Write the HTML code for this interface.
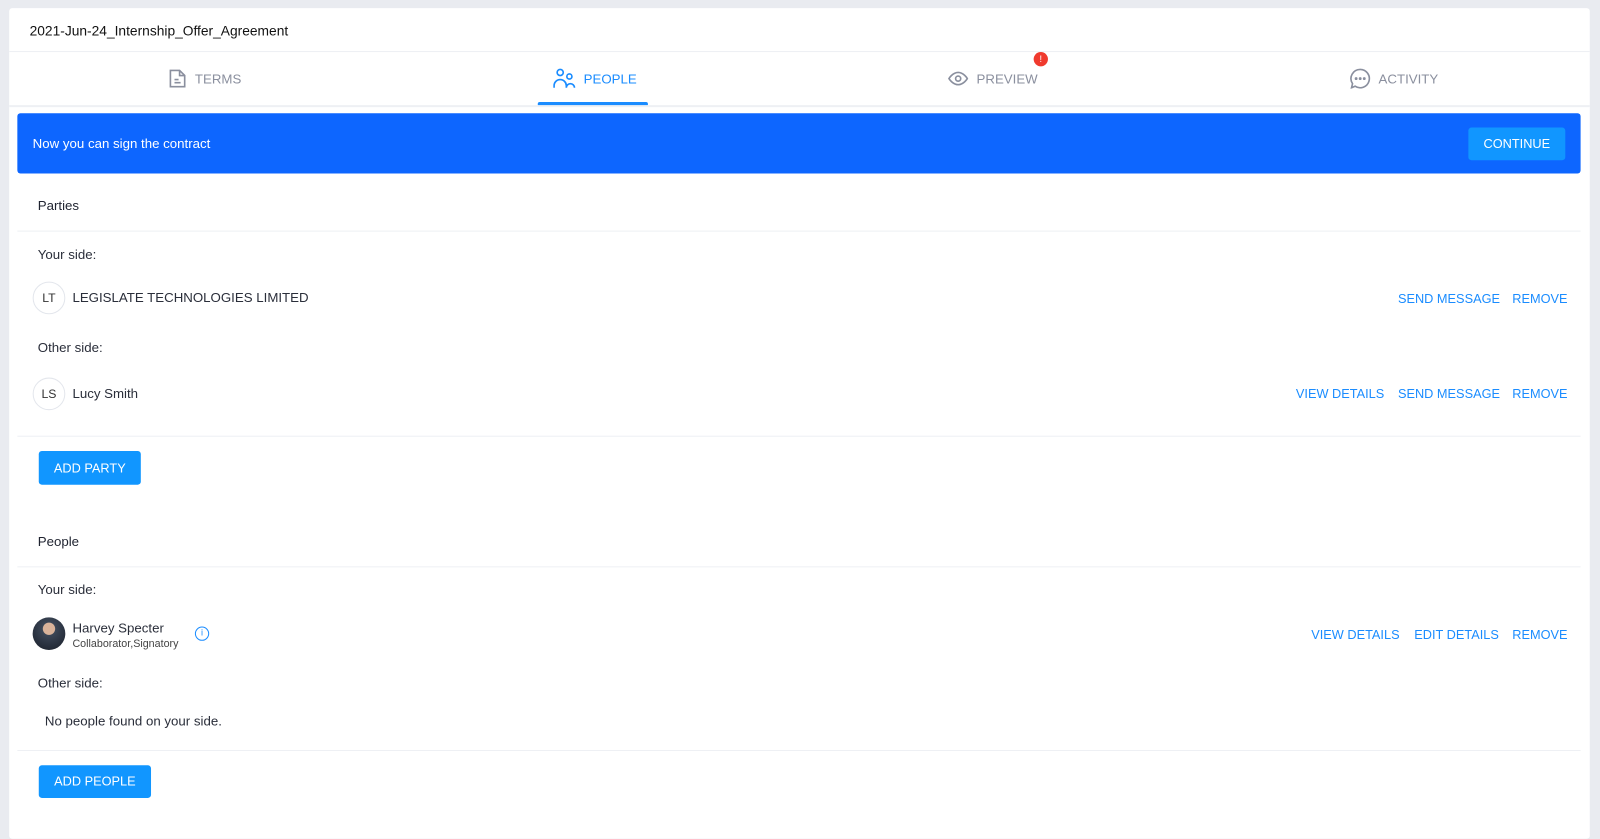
<!DOCTYPE html>
<html><head><style>
*{box-sizing:border-box;margin:0;padding:0}
body{width:1600px;height:822px;background:#e9ebf0;font-family:"Liberation Sans",sans-serif;color:#1f2330;position:relative;overflow:hidden}
#w{position:absolute;left:0;top:0;width:1568px;height:806px;transform:scale(1.0204);transform-origin:0 0}
.card{position:absolute;left:9px;top:8px;width:1549px;height:814px;background:#fff;border-radius:3px}
.abs{position:absolute}
.line{position:absolute;height:1px;background:#eef0f4}
.tab{position:absolute;top:66px;height:22px;font-size:13px;color:#8a8f9e;display:flex;align-items:center;gap:8px}
.link{position:absolute;font-size:12.5px;color:#1a8cff}
.btn{position:absolute;background:#1196ff;color:#fff;font-size:12.5px;border-radius:3px;display:flex;align-items:center;justify-content:center}
.av{position:absolute;width:32px;height:32px;border-radius:50%;border:1px solid #e3e6ec;font-size:12px;color:#333;display:flex;align-items:center;justify-content:center}
.lbl{position:absolute;font-size:13px;color:#2a2e3a}
</style></head><body><div id="w">
<div class="card"></div>
<div class="abs" style="left:29px;top:23px;font-size:13.5px;color:#111">2021-Jun-24_Internship_Offer_Agreement</div>
<div class="line" style="left:9px;width:1549px;top:50px"></div>
<div class="tab" style="left:165px"><svg width="18" height="20" viewBox="0 0 18 20" fill="none" stroke="#8a8f9e" stroke-width="1.6"><path d="M2 2h9l5 5v11H2z"/><path d="M11 2v5h5M6 11h4M6 14h6"/></svg>TERMS</div>
<div class="tab" style="left:542px;color:#1a8cff"><svg width="22" height="20" viewBox="0 0 22 20" fill="none" stroke="#1a8cff" stroke-width="1.6"><circle cx="7" cy="4" r="3"/><circle cx="16" cy="8" r="2.5"/><path d="M1 19v-2a6 6 0 0 1 12 0v2M13 19a4 4 0 0 1 8 0"/></svg>PEOPLE</div>
<div class="abs" style="left:527px;top:100px;width:108px;height:4px;background:#1a8cff;border-radius:2px"></div>
<div class="tab" style="left:929px"><svg width="20" height="14" viewBox="0 0 20 14" fill="none" stroke="#8a8f9e" stroke-width="1.6"><path d="M1 7s3.5-6 9-6 9 6 9 6-3.5 6-9 6-9-6-9-6z"/><circle cx="10" cy="7" r="2.5"/></svg>PREVIEW</div>
<div class="abs" style="left:1013px;top:51px;width:14px;height:14px;border-radius:50%;background:#f03a2e;color:#fff;font-size:9px;text-align:center;line-height:14px">!</div>
<div class="tab" style="left:1323px"><svg width="20" height="20" viewBox="0 0 20 20" fill="none" stroke="#8a8f9e" stroke-width="1.6"><path d="M10 1a9 9 0 1 1-5 16.5L1.5 19l1-4A9 9 0 0 1 10 1z"/><circle cx="6" cy="10" r=".6" fill="#8a8f9e"/><circle cx="10" cy="10" r=".6" fill="#8a8f9e"/><circle cx="14" cy="10" r=".6" fill="#8a8f9e"/></svg>ACTIVITY</div>
<div class="line" style="left:9px;width:1549px;top:103px;height:2px"></div>
<div class="abs" style="left:17px;top:111px;width:1532px;height:59px;background:#0d66ff;border-radius:3px"></div>
<div class="abs" style="left:32px;top:133px;font-size:13px;color:#fff">Now you can sign the contract</div>
<div class="btn" style="left:1439px;top:125px;width:95px;height:32px">CONTINUE</div>
<div class="lbl" style="left:37px;top:194px;color:#1f2330">Parties</div>
<div class="line" style="left:17px;width:1532px;top:226px"></div>
<div class="lbl" style="left:37px;top:242px">Your side:</div>
<div class="av" style="left:32px;top:276px">LT</div>
<div class="lbl" style="left:71px;top:284px">LEGISLATE TECHNOLOGIES LIMITED</div>
<div class="link" style="left:1370px;top:286px">SEND MESSAGE</div>
<div class="link" style="left:1482px;top:286px">REMOVE</div>
<div class="lbl" style="left:37px;top:333px">Other side:</div>
<div class="av" style="left:32px;top:370px">LS</div>
<div class="lbl" style="left:71px;top:378px">Lucy Smith</div>
<div class="link" style="left:1270px;top:379px">VIEW DETAILS</div>
<div class="link" style="left:1370px;top:379px">SEND MESSAGE</div>
<div class="link" style="left:1482px;top:379px">REMOVE</div>
<div class="line" style="left:17px;width:1532px;top:427px"></div>
<div class="btn" style="left:38px;top:442px;width:100px;height:33px">ADD PARTY</div>
<div class="lbl" style="left:37px;top:523px;color:#1f2330">People</div>
<div class="line" style="left:17px;width:1532px;top:555px"></div>
<div class="lbl" style="left:37px;top:570px">Your side:</div>
<div class="abs" style="left:32px;top:605px;width:32px;height:32px;border-radius:50%;background:radial-gradient(circle at 50% 35%,#d9b39a 0 22%,#3b4656 24%,#2a3240 60%,#1a1f28)"></div>
<div class="lbl" style="left:71px;top:608px">Harvey Specter</div>
<div class="abs" style="left:71px;top:625px;font-size:10.5px;color:#444">Collaborator,Signatory</div>
<div class="abs" style="left:191px;top:614px;width:14px;height:14px;border-radius:50%;border:1.5px solid #1a8cff;color:#1a8cff;font-size:9px;text-align:center;line-height:11px">i</div>
<div class="link" style="left:1285px;top:615px">VIEW DETAILS</div>
<div class="link" style="left:1386px;top:615px">EDIT DETAILS</div>
<div class="link" style="left:1482px;top:615px">REMOVE</div>
<div class="lbl" style="left:37px;top:662px">Other side:</div>
<div class="lbl" style="left:44px;top:699px">No people found on your side.</div>
<div class="line" style="left:17px;width:1532px;top:735px"></div>
<div class="btn" style="left:38px;top:750px;width:110px;height:32px">ADD PEOPLE</div>
</div></body></html>
